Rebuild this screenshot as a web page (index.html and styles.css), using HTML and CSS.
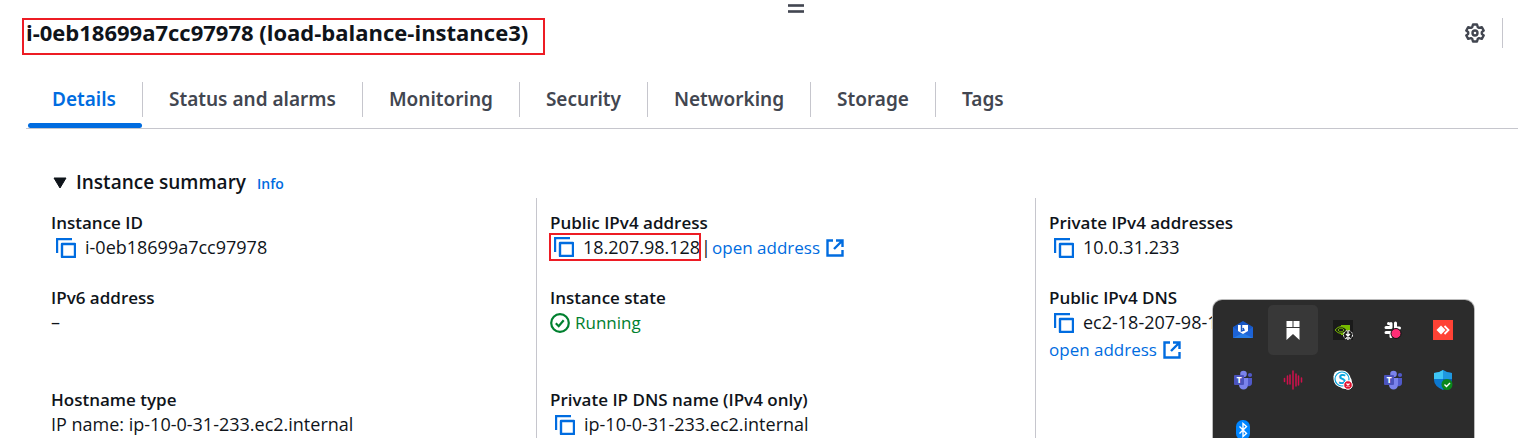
FILE: index.html
```html
<!DOCTYPE html>
<html lang="en">
<head>
<meta charset="utf-8">
<title>EC2 instance details</title>
<link rel="stylesheet" href="styles.css">
</head>
<body>
<svg class="defs" aria-hidden="true">
  <symbol id="copy" viewBox="0 0 20 20"><path d="M1 15V1h15M6 6h13v13H6z" fill="none" stroke="#006ce0" stroke-width="2.4" stroke-linejoin="round"/></symbol>
  <symbol id="external" viewBox="0 0 18 18"><path d="M7 1.500H1.500V16.500H16.500V11M10 1.500h6.500V8M16 2L8 10" fill="none" stroke="#006ce0" stroke-width="2.400"/></symbol>
  <symbol id="teams" viewBox="0 0 20 20">
    <circle cx="10.500" cy="4" r="3.300" fill="#7b83eb"/><circle cx="17" cy="5" r="2.100" fill="#5059c9"/>
    <path d="M15 8h4v5a3 3 0 0 1-4 3z" fill="#5059c9"/><path d="M6 8h9v7a4.500 4.500 0 0 1-9 0z" fill="#7b83eb"/>
    <rect x="1" y="5" width="10" height="10" rx="1" fill="#4b53bc"/>
  </symbol>
</svg>
<main class="panel">
  <button class="grip" aria-label="Resize panel"><svg width="16" height="10"><path d="M0 1.500h16M0 7.500h16" stroke="#656872" stroke-width="3"/><path d="M0 1.500h16M0 7.500h16" stroke="#424650" stroke-width="1"/></svg></button>
  <header class="head">
    <h1 class="title">i-0eb18699a7cc97978 (load-balance-instance3)</h1>
    <button class="gear" aria-label="Preferences"><svg width="20" height="20" viewBox="0 0 20 20" fill="none" stroke="#424650" stroke-width="2.400" stroke-linejoin="round"><path d="M8 1.500h4l.8 2.700 1.300.7 2.700-.7 1.900 3.300-1.900 1.700v1.600l1.900 1.700-1.900 3.300-2.700-.7-1.300.7-.8 2.700H8l-.8-2.700-1.300-.7-2.700.7-1.900-3.300 1.900-1.700V9.200L1.300 7.500l1.900-3.300 2.700.7 1.300-.7z"/><circle cx="10" cy="10" r="2.500"/></svg></button>
  </header>
  <nav class="tabs" role="tablist">
    <button class="tab active" role="tab" aria-selected="true">Details</button>
    <button class="tab" role="tab">Status and alarms</button>
    <button class="tab" role="tab">Monitoring</button>
    <button class="tab" role="tab">Security</button>
    <button class="tab" role="tab">Networking</button>
    <button class="tab" role="tab">Storage</button>
    <button class="tab" role="tab">Tags</button>
  </nav>
  <section class="summary">
    <div class="section-head">
      <button class="toggle" aria-expanded="true"><svg width="14" height="12"><path d="M1 1h12L7 11z" fill="#0f141a" stroke="#0f141a" stroke-linejoin="round"/></svg><span>Instance summary</span></button>
      <a class="info" href="#">Info</a>
    </div>
    <div class="grid">
      <dl class="cell"><dt>Instance ID</dt><dd><button class="copy" aria-label="Copy instance ID"><svg><use href="#copy"/></svg></button>i-0eb18699a7cc97978</dd></dl>
      <dl class="cell"><dt>Public IPv4 address</dt><dd><span class="marked"><button class="copy" aria-label="Copy public IPv4"><svg><use href="#copy"/></svg></button>18.207.98.128</span><span class="bar">|</span><a href="#">open address<svg class="ext"><use href="#external"/></svg></a></dd></dl>
      <dl class="cell"><dt>Private IPv4 addresses</dt><dd><button class="copy" aria-label="Copy private IPv4"><svg><use href="#copy"/></svg></button>10.0.31.233</dd></dl>
      <dl class="cell tall"><dt>IPv6 address</dt><dd>–</dd></dl>
      <dl class="cell tall"><dt>Instance state</dt><dd class="running"><svg width="20" height="20" viewBox="0 0 20 20" fill="none" stroke="#00802f" stroke-width="2.200"><circle cx="10" cy="10" r="8.800"/><path d="M5.800 10.300l2.900 2.900 5-6"/></svg>Running</dd></dl>
      <dl class="cell tall"><dt>Public IPv4 DNS</dt><dd><button class="copy" aria-label="Copy public DNS"><svg><use href="#copy"/></svg></button>ec2-18-207-98-128</dd><dd class="second"><a href="#">open address<svg class="ext"><use href="#external"/></svg></a></dd></dl>
      <dl class="cell"><dt>Hostname type</dt><dd>IP name: ip-10-0-31-233.ec2.internal</dd></dl>
      <dl class="cell"><dt>Private IP DNS name (IPv4 only)</dt><dd><button class="copy" aria-label="Copy private DNS"><svg><use href="#copy"/></svg></button>ip-10-0-31-233.ec2.internal</dd></dl>
      <dl class="cell"></dl>
    </div>
  </section>
</main>
<aside class="tray" aria-label="System tray">
  <button class="app" aria-label="Mail"><svg viewBox="0 0 20 20"><path d="M0 7L10 1l10 6v11H0z" fill="#1857c4"/><path d="M0 7l10 7L0 18zM20 7l-10 7 10 4z" fill="#1d63d6"/><path d="M0 18l10-5 10 5z" fill="#267be5"/><path d="M5 5h10v6l-5 3-5-3z" fill="#fff"/><path d="M8.500 5v6l2.500-1-1-2" fill="none" stroke="#1857c4" stroke-width="1.500"/></svg></button>
  <button class="app lit" aria-label="Bookmarks"><svg viewBox="0 0 20 20"><path d="M3.500 1h6v6h-6zM10.500 1h6v6h-6zM3.500 8h13v12L10 14l-6.500 6z" fill="#fff"/></svg></button>
  <button class="app" aria-label="Graphics settings"><svg viewBox="0 0 20 20"><path d="M0 0h20v20H0z" fill="#1a1a1a"/><path d="M8 5h9v10H8z" fill="#76b900"/><path d="M2 10q6-7 12 0-6 7-12 0z" fill="#1a1a1a" stroke="#76b900"/><path d="M5 10q3-4 6 0-3 4-6 0z" fill="none" stroke="#76b900"/><circle cx="15" cy="15" r="4.500" fill="#1a1a1a" stroke="#fff" stroke-dasharray="2 1"/><path d="M15 11v5m-2-2l2 2 2-2m-4 4h4" fill="none" stroke="#fff" stroke-width="1.300"/></svg></button>
  <button class="app" aria-label="Slack"><svg viewBox="0 0 20 20"><path d="M8 3.500v4M12.500 3v5M3 7.500h5M3 12.500h4M12.500 8h4M8 12.500v4M5.500 3.500h.1" stroke="#fff" stroke-width="3" stroke-linecap="round"/><circle cx="13" cy="13.500" r="5" fill="#ff2d76" stroke="#111"/></svg></button>
  <button class="app" aria-label="Remote desktop"><svg viewBox="0 0 20 20"><path d="M0 0h20v20H0z" fill="#ff4235"/><path d="M8 5.500l4.500 4.500L8 14.500 3.500 10z" fill="#fff"/><path d="M11.500 6l4 4-4 4" fill="none" stroke="#fff" stroke-width="1.800"/></svg></button>
  <button class="app" aria-label="Teams"><svg viewBox="0 0 20 20"><use href="#teams"/><text x="6" y="13" class="teams-letter">T</text></svg></button>
  <button class="app" aria-label="Audio"><svg viewBox="0 0 20 20"><path d="M1.500 8.500v3M4.500 6v8M7 5v9M10 1v18M13 4v12M15.500 6v9M18.500 8v4" stroke="#d0104c" stroke-width="1.500" stroke-linecap="round"/></svg></button>
  <button class="app" aria-label="Skype"><svg viewBox="0 0 20 20"><circle cx="6.500" cy="6.500" r="6" fill="#fff"/><circle cx="12" cy="12" r="7" fill="#fff"/><circle cx="9" cy="9" r="8.500" fill="#fff"/><circle cx="9" cy="9" r="7" fill="#fff" stroke="#0aa5dd" stroke-width="1.200"/><text x="9" y="14" class="skype-letter">S</text><circle cx="15" cy="15" r="4.300" fill="#e1122f" stroke="#fff"/><path d="M13.500 13.500l3 3m0-3l-3 3" stroke="#fff" stroke-width="1.200"/></svg></button>
  <button class="app" aria-label="Teams work"><svg viewBox="0 0 20 20"><use href="#teams"/><text x="6" y="13" class="teams-letter">T</text></svg></button>
  <button class="app" aria-label="Security"><svg viewBox="0 0 20 20"><path d="M10 0q4 3 9 3v7q0 6-9 10z" fill="#0560b4"/><path d="M10 0q-4 3-9 3v7q0 6 9 10z" fill="#0c78d0"/><path d="M10 0q-4 3-9 3v6h9z" fill="#3fc6f5"/><path d="M10 0q4 3 9 3v6h-9z" fill="#1f98e0"/><circle cx="14" cy="14.500" r="5.500" fill="#0b871b"/><path d="M11.500 14.500l2 2 3.500-3.500" fill="none" stroke="#fff" stroke-width="1.400"/></svg></button>
  <button class="app" aria-label="Bluetooth"><svg viewBox="0 0 20 20"><rect x="3" width="14" height="20" rx="6.500" fill="#0085ff"/><path d="M6.500 6.500l7 7-3.500 3V3.500l3.500 3-7 7" fill="none" stroke="#fff" stroke-width="1.400"/></svg></button>
</aside>
</body>
</html>
```

FILE: styles.css
```css
* { box-sizing: border-box; }
html { overflow: hidden; }
body { margin: 0; background: #fff; color: #0f141a; font: 18px/25px "Open Sans", "Noto Sans", sans-serif; }
button { border: 0; background: none; padding: 0; margin: 0; font: inherit; color: inherit; }
a { color: #006ce0; text-decoration: none; }
svg { display: block; flex: none; }
.defs { position: absolute; width: 0; height: 0; }
.panel { padding-left: 22px; }
.grip { display: block; height: 18px; margin: 0 auto; padding: 4px 0 4px 52px; }
.head { display: flex; align-items: flex-start; justify-content: space-between; }
.title { margin: 0; padding: 0 15px 8px 2px; border: 2px solid #ed1c24; font-size: 22px; line-height: 25px; font-weight: 700; }
.gear { display: flex; align-items: center; height: 30px; margin-right: 15px; padding-right: 17px; border-right: 1px solid #c6c6cd; }
.tabs { display: flex; align-items: flex-start; margin: 27px 0 0 4px; height: 47px; border-bottom: 1px solid #c6c6cd; }
.tab { position: relative; height: 35px; padding: 0 26px; border-right: 1px solid #c6c6cd; font-family: "Noto Sans", sans-serif; font-size: 19px; font-weight: 600; color: #424650; }
.tab:last-child { border: 0; }
.tab.active { color: #006ce0; }
.tab.active::after { content: ""; position: absolute; left: 2px; right: 0; bottom: -11px; height: 5px; border-radius: 3px; background: #006ce0; }
.summary { padding: 41px 0 0 29px; }
.section-head { display: flex; align-items: baseline; gap: 11px; height: 28px; }
.toggle { display: flex; align-items: center; gap: 9px; padding-left: 2px; font-size: 19px; font-weight: 600; }
.info { font-size: 14px; font-weight: 600; }
.grid { display: grid; grid-template-columns: 485px 499px 1fr; }
.cell { margin: 0; padding: 12px 0 13px 13px; border-left: 1px solid #c6c6cd; white-space: nowrap; }
.cell:nth-child(3n + 1) { padding-left: 0; border-left: 0; }
dt { font-size: 17px; font-weight: 600; }
dd { display: flex; align-items: center; margin: 0; }
.second { margin-top: 2px; }
.tall { height: 102px; }
.copy { margin: 0 9px 0 5px; }
.copy svg { width: 20px; height: 20px; }
a .ext { width: 18px; height: 18px; margin-left: 6px; }
dd a { display: flex; align-items: center; font-size: 17px; }
.marked { display: flex; align-items: center; height: 28px; margin: -2px 0 -1px -1px; padding-right: 1px; outline: 2px solid #ed1c24; outline-offset: -2px; }
.bar { width: 11px; }
.running { gap: 5px; font-size: 17px; color: #00802f; }
.tray { position: absolute; top: 300px; right: 44px; width: 261px; height: 138px; padding: 5px; display: grid; grid-template-columns: repeat(5, 50px); grid-auto-rows: 50px; border-radius: 9px 9px 0 0; background: #2c2c2c; box-shadow: 0 0 0 1px #bbb; overflow: hidden; }
.app { display: grid; place-items: center; border-radius: 5px; }
.app svg { width: 20px; height: 20px; }
.lit { background: #383838; }
.teams-letter { font: 700 9px "Noto Sans", sans-serif; fill: #fff; text-anchor: middle; }
.skype-letter { font: 700 14px "Noto Sans", sans-serif; fill: #0aa5dd; text-anchor: middle; }
```
